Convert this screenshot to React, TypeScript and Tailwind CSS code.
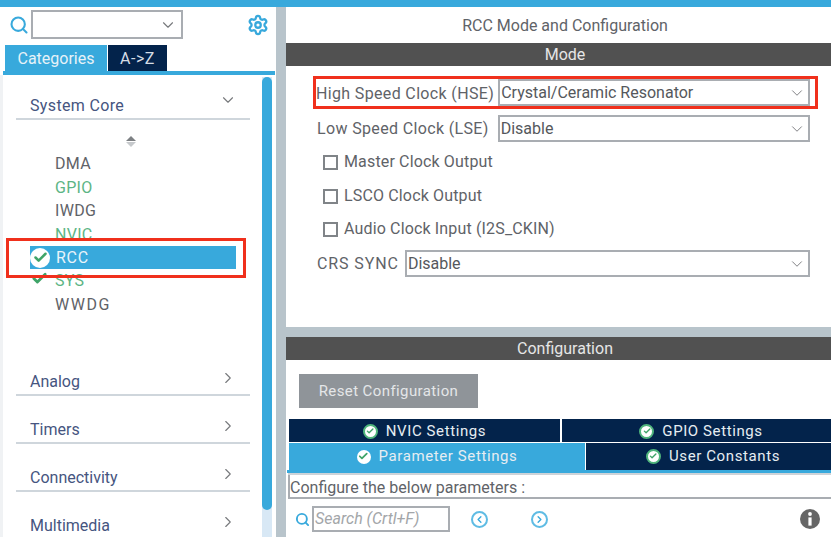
import { ChevronDown, ChevronRight, ChevronLeft, Search, Settings, Check } from "lucide-react"

const items = [
  { name: "DMA", color: "text-[#5f6368]" },
  { name: "GPIO", color: "text-[#5cb585]" },
  { name: "IWDG", color: "text-[#5f6368]" },
  { name: "NVIC", color: "text-[#5cb585]" },
]

function CategoryRow({ name, open }: { name: string; open?: boolean }) {
  return (
    <div className="ml-[16px] flex h-[48px] w-[234px] items-end justify-between border-b-2 border-[#cfd6dc] pl-[14px] pr-[13px]">
      <span className={`text-[16px] leading-[24px] text-[#46557f] ${open ? "tracking-[0.35px]" : ""}`}>{name}</span>
      {open ? (
        <ChevronDown className="mb-[9px] h-[18px] w-[18px] text-[#77797c]" strokeWidth={1.5} />
      ) : (
        <ChevronRight className="mb-[7px] h-[18px] w-[18px] text-[#77797c]" strokeWidth={1.5} />
      )}
    </div>
  )
}

function SelectBox({ value, className }: { value: string; className: string }) {
  return (
    <div className={`flex h-[27px] items-center justify-between border-2 border-[#a9adb2] pl-[1px] pr-[2px] ${className}`}>
      <span className="text-[16px] text-[#55585c]">{value}</span>
      <ChevronDown className="h-[18px] w-[18px] text-[#77797c]" strokeWidth={1.25} />
    </div>
  )
}

function CheckRow({ label, className }: { label: string; className: string }) {
  return (
    <div className={`ml-[37px] flex items-center gap-[6px] ${className}`}>
      <span className="h-[15px] w-[15px] border-2 border-[#808488] bg-white" />
      <span className="text-[16px] leading-[20px] tracking-[0.15px] text-[#5f6368]">{label}</span>
    </div>
  )
}

function GreenCheck({ className }: { className: string }) {
  return (
    <span className={`flex items-center justify-center rounded-full bg-white ${className}`}>
      <Check className="h-[75%] w-[75%] text-[#3fa468]" strokeWidth={4} />
    </span>
  )
}

function SubTab({ label, className, ringed }: { label: string; className: string; ringed?: boolean }) {
  return (
    <div className={`flex items-center justify-center gap-[8px] text-[15px] tracking-[0.6px] text-[#e6edf2] ${className}`}>
      <GreenCheck className={ringed ? "h-[15px] w-[15px] border-2 border-[#4fb47c]" : "h-[14px] w-[14px]"} />
      <span>{label}</span>
    </div>
  )
}

export default function App() {
  return (
    <div className="h-[537px] w-[831px] overflow-hidden bg-white font-['Roboto',sans-serif]">
      <div className="h-[7px] bg-[#38a9dc]" />
      <div className="flex h-[530px]">
        {/* left panel */}
        <div className="flex w-[276px] shrink-0 flex-col">
          <div className="flex items-center pl-[9px] pr-[7px] pt-[3px]">
            <Search className="h-[20px] w-[20px] text-[#38a9dc]" strokeWidth={2.5} />
            <div className="ml-[2px] flex h-[29px] w-[152px] items-center justify-end border-2 border-[#a9adb2] pr-[4px]">
              <ChevronDown className="h-[18px] w-[18px] text-[#77797c]" strokeWidth={1.5} />
            </div>
            <Settings className="ml-auto h-[22px] w-[22px] text-[#38a9dc]" strokeWidth={2.5} />
          </div>
          <div className="ml-[5px] mt-[6px] flex h-[26px] gap-[1px]">
            <div className="flex w-[102px] items-center justify-center bg-[#38a9dc] pt-[2px] text-[16px] text-[#e6f2f8]">
              Categories
            </div>
            <div className="flex w-[59px] items-center justify-center bg-[#03234b] pt-[2px] text-[16px] tracking-[0.5px] text-[#d5dde5]">
              A-&gt;Z
            </div>
          </div>
          <div className="ml-[3px] h-[4px] w-[272px] bg-[#38a9dc]" />
          <div className="flex min-h-0 flex-1 border-l-[3px] border-[#f0f2f4]">
            <div className="-ml-[3px] w-[259px]">
              <div className="-mt-[3px]">
                <CategoryRow name="System Core" open />
              </div>
              <div className="relative h-[228px]">
                <div className="flex h-[32px] flex-col items-center justify-center gap-[1px] pl-[3px] pt-[10px]">
                  <span className="h-0 w-0 border-x-[5px] border-b-[5px] border-x-transparent border-b-[#7d8083]" />
                  <span className="h-0 w-0 border-x-[5px] border-t-[5px] border-x-transparent border-t-[#c6c9cc]" />
                </div>
                {items.map((it) => (
                  <div key={it.name} className={`h-[23.5px] pl-[55px] text-[16px] leading-[23.5px] tracking-[0.3px] ${it.color}`}>
                    {it.name}
                  </div>
                ))}
                <div className="ml-[30px] flex h-[23px] w-[206px] items-center bg-[#38a9dc]">
                  <GreenCheck className="h-[20px] w-[20px]" />
                  <span className="ml-[6px] text-[16px] tracking-[0.7px] text-[#e9f4fa]">RCC</span>
                </div>
                <div className="relative h-[24px] pl-[55px] text-[16px] leading-[24px] tracking-[0.3px] text-[#5cb585]">
                  <Check className="absolute left-[31px] top-[1px] h-[17px] w-[17px] text-[#3fa468]" strokeWidth={4} />
                  SYS
                </div>
                <div className="h-[23.5px] pl-[55px] text-[16px] leading-[23.5px] tracking-[1.5px] text-[#5f6368]">WWDG</div>
                {/* red highlight */}
                <div className="absolute left-[6px] top-[118px] h-[40px] w-[240px] border-[3px] border-[#f0301c]" />
              </div>
              <CategoryRow name="Analog" />
              <CategoryRow name="Timers" />
              <CategoryRow name="Connectivity" />
              <CategoryRow name="Multimedia" />
            </div>
            <div className="ml-[3px] mt-[2px] flex w-[10px] flex-col bg-[#d8e8f5]">
              <div className="h-[433px] rounded-[5px] bg-[#38a9dc]" />
            </div>
          </div>
        </div>
        <div className="w-[10px] shrink-0 bg-[#b8c4cb]" />
        {/* right panel, runs a little past the window edge */}
        <div className="flex w-[558px] shrink-0 flex-col">
          <div className="flex h-[36px] items-center justify-center pt-[2px] text-[16px] text-[#5f6368]">
            RCC Mode and Configuration
          </div>
          <div className="flex h-[23px] items-center justify-center bg-[#515151] pt-[1px] text-[16px] text-[#e6e6e6]">Mode</div>
          <div className="h-[261px]">
            <div className="ml-[27px] mt-[10px] flex h-[33px] w-[505px] items-center border-[3px] border-[#f0301c] pr-[5px]">
              <span className="pt-[2px] text-[16px] tracking-[0.35px] text-[#5f6368]">High Speed Clock (HSE)</span>
              <SelectBox value="Crystal/Ceramic Resonator" className="ml-[4px] flex-1" />
            </div>
            <div className="ml-[31px] mt-[6px] flex w-[493px] items-center">
              <span className="text-[16px] tracking-[0.35px] text-[#5f6368]">Low Speed Clock (LSE)</span>
              <SelectBox value="Disable" className="ml-[9px] flex-1" />
            </div>
            <CheckRow label="Master Clock Output" className="mt-[10px]" />
            <CheckRow label="LSCO Clock Output" className="mt-[14px]" />
            <CheckRow label="Audio Clock Input (I2S_CKIN)" className="mt-[13px]" />
            <div className="ml-[31px] mt-[11px] flex w-[493px] items-center">
              <span className="text-[16px] tracking-[0.9px] text-[#5f6368]">CRS SYNC</span>
              <SelectBox value="Disable" className="ml-[6px] flex-1" />
            </div>
          </div>
          <div className="h-[10px] bg-[#b8c4cb]" />
          <div className="flex h-[23px] items-center justify-center bg-[#515151] pt-[1px] text-[16px] text-[#e6e6e6]">
            Configuration
          </div>
          <div className="ml-[13px] mt-[14px] flex h-[34px] w-[179px] items-center justify-center bg-[#8f9499] text-[15px] tracking-[0.4px] text-[#e4e6e8]">
            Reset Configuration
          </div>
          <div className="ml-[3px] mt-[11px] flex h-[23px] w-[551px] gap-[2px]">
            <SubTab label="NVIC Settings" ringed className="w-[271px] bg-[#03234b] pt-[2px]" />
            <SubTab label="GPIO Settings" ringed className="flex-1 bg-[#03234b] pt-[2px]" />
          </div>
          <div className="ml-[3px] mt-[1px] flex h-[27px] w-[551px] gap-[1px]">
            <SubTab label="Parameter Settings" className="w-[296px] bg-[#38a9dc]" />
            <SubTab label="User Constants" ringed className="flex-1 bg-[#03234b]" />
          </div>
          <div className="ml-[1px] h-[3px] bg-[#38a9dc]" />
          <div className="ml-[2px] h-[2px] bg-[#cdd3d8]" />
          <div className="ml-[2px] flex h-[24px] items-center border-b-2 border-l-2 border-[#a9adb2] pt-[3px] text-[16px] text-[#5f6368]">
            Configure the below parameters :
          </div>
          <div className="mt-[7px] flex items-center pl-[9px]">
            <Search className="h-[15px] w-[15px] text-[#38a9dc]" strokeWidth={3} />
            <div className="ml-[2px] flex h-[26px] w-[138px] items-center border-2 border-[#a9adb2] pl-[1px] text-[16px] italic text-[#a3a6a9]">
              Search (Crtl+F)
            </div>
            <span className="ml-[21px] flex h-[17px] w-[17px] items-center justify-center rounded-full border-2 border-[#5fbce4]">
              <ChevronLeft className="h-[11px] w-[11px] text-[#38a9dc]" strokeWidth={3} />
            </span>
            <span className="ml-[43px] flex h-[17px] w-[17px] items-center justify-center rounded-full border-2 border-[#5fbce4]">
              <ChevronRight className="h-[11px] w-[11px] text-[#38a9dc]" strokeWidth={3} />
            </span>
            <svg className="ml-[252px] h-[20px] w-[20px]" viewBox="0 0 20 20">
              <circle cx="10" cy="10" r="10" fill="#666666" />
              <circle cx="10" cy="5" r="1.9" fill="#ffffff" />
              <rect x="8.4" y="8.4" width="3.2" height="8.2" fill="#ffffff" />
            </svg>
          </div>
        </div>
      </div>
    </div>
  )
}
